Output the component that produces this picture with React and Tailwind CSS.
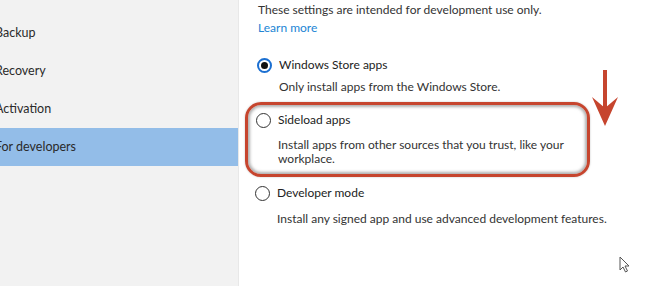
const navItems = ['Windows Defender', 'Backup', 'Recovery', 'Activation', 'For developers'];

function Radio({ checked }) {
  if (checked) {
    return (
      <span className="flex h-[15px] w-[15px] shrink-0 items-center justify-center rounded-full border-2 border-[#1b6fd1]">
        <span className="h-[7px] w-[7px] rounded-full bg-[#111]" />
      </span>
    );
  }
  return <span className="h-[15px] w-[15px] shrink-0 rounded-full border-[1.5px] border-[#333]" />;
}

function Option({ checked, label, desc, className = '' }) {
  return (
    <div className={className}>
      <div className="flex h-[18px] items-center">
        <Radio checked={checked} />
        <span className="ml-[7px] text-[12px] leading-[18px] text-[#222]">{label}</span>
      </div>
      {desc}
    </div>
  );
}

export default function App() {
  return (
    <div className="relative flex h-[286px] w-[672px] overflow-hidden bg-white font-['Lato',sans-serif] text-[#2b2b2b]">
      {/* left nav */}
      <aside className="w-[238px] shrink-0 bg-[#f2f2f2]">
        <ul className="-mt-[24px]">
          {navItems.map((item) => (
            <li
              key={item}
              className={`flex h-[38px] items-center text-[12.5px] text-[#2a2a2a] ${
                item === 'For developers' ? 'bg-[#93bde8]' : ''
              }`}
            >
              <span className="-ml-[5px]">{item}</span>
            </li>
          ))}
        </ul>
      </aside>

      {/* settings */}
      <main className="flex-1 border-l border-[#e8e8e8] pl-[18px] pt-px">
        <p className="ml-px text-[12px] leading-[18px] text-[#333]">
          These settings are intended for development use only.
        </p>
        <a className="ml-px block text-[12px] leading-[18px] text-[#2184d4]">Learn more</a>

        <Option
          checked
          label="Windows Store apps"
          className="mt-[19px]"
          desc={
            <p className="mt-[4px] pl-[22px] text-[12px] leading-[18px] text-[#333]">
              Only install apps from the Windows Store.
            </p>
          }
        />

        <div className="-ml-[12px] mt-[6px] w-[345px] rounded-[16px] border-[3px] border-[#c6452e] pb-[8px] pl-[8px] pt-[6px] shadow-[inset_0_0_3px_2px_rgba(110,110,110,0.55),0_0_2px_rgba(0,0,0,0.25)]">
          <Option
            label="Sideload apps"
            desc={
              <p className="mt-[9px] pl-[22px] text-[12px] leading-[14px] text-[#333]">
                Install apps from other sources that you trust, like your
                <br />
                workplace.
              </p>
            }
          />
        </div>

        <Option
          label="Developer mode"
          className="-ml-[2px] mt-[7px]"
          desc={
            <p className="mt-[8px] pl-[22px] text-[12px] leading-[18px] text-[#333]">
              Install any signed app and use advanced development features.
            </p>
          }
        />
      </main>

      {/* annotation arrow */}
      <svg className="absolute left-[590px] top-[66px] h-[64px] w-[30px]" viewBox="0 0 30 64">
        <path d="M15 4 V44" stroke="#c6452e" strokeWidth="4" />
        <path d="M2 31 L15 42 L28 31 L15 60 Z" fill="#c6452e" />
      </svg>

      {/* mouse pointer */}
      <svg className="absolute left-[619px] top-[256px] h-[18px] w-[12px]" viewBox="0 0 12 18">
        <path d="M1 1 V14 L4 11 L6.5 16 L8.5 15 L6 10 H10 Z" fill="#fff" stroke="#555" strokeWidth="1" strokeLinejoin="round" />
      </svg>
    </div>
  );
}
